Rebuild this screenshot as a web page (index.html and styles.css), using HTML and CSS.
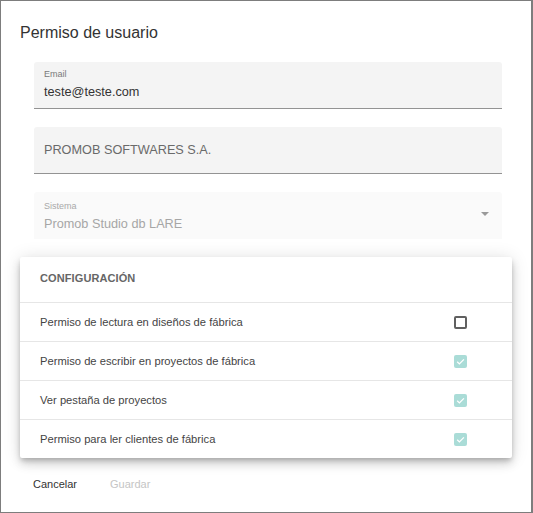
FILE: index.html
```html
<!DOCTYPE html>
<html lang="es">
<head>
<meta charset="utf-8">
<title>Permiso de usuario</title>
<link rel="stylesheet" href="styles.css">
</head>
<body>
<div class="frame">
  <h1 class="title">Permiso de usuario</h1>
  <div class="fields">
    <div class="field">
      <div class="label">Email</div>
      <div class="value">teste@teste.com</div>
    </div>
    <div class="field field-nolabel">
      <div class="value value-muted">PROMOB SOFTWARES S.A.</div>
    </div>
    <div class="field field-disabled">
      <div class="field-main">
        <div class="label">Sistema</div>
        <div class="value">Promob Studio db LARE</div>
      </div>
      <span class="arrow"></span>
    </div>
  </div>
  <div class="card">
    <div class="card-header">CONFIGURACIÓN</div>
    <div class="row">
      <span class="row-text">Permiso de lectura en diseños de fábrica</span>
      <span class="cb"></span>
    </div>
    <div class="row">
      <span class="row-text">Permiso de escribir en proyectos de fábrica</span>
      <span class="cb cb-checked"><svg viewBox="0 0 13 13" width="13" height="13"><path d="M3.2 6.8 L5.4 8.9 L9.9 4.4" fill="none" stroke="#fff" stroke-width="1.3"/></svg></span>
    </div>
    <div class="row">
      <span class="row-text">Ver pestaña de proyectos</span>
      <span class="cb cb-checked"><svg viewBox="0 0 13 13" width="13" height="13"><path d="M3.2 6.8 L5.4 8.9 L9.9 4.4" fill="none" stroke="#fff" stroke-width="1.3"/></svg></span>
    </div>
    <div class="row">
      <span class="row-text">Permiso para ler clientes de fábrica</span>
      <span class="cb cb-checked"><svg viewBox="0 0 13 13" width="13" height="13"><path d="M3.2 6.8 L5.4 8.9 L9.9 4.4" fill="none" stroke="#fff" stroke-width="1.3"/></svg></span>
    </div>
  </div>
  <div class="actions">
    <span class="btn">Cancelar</span>
    <span class="btn btn-disabled">Guardar</span>
  </div>
</div>
</body>
</html>
```

FILE: styles.css
```css
* { box-sizing: border-box; }
html, body { margin: 0; padding: 0; background: #fff; }
body { font-family: "Liberation Sans", Arial, sans-serif; }

.frame {
  width: 533px;
  height: 513px;
  border: 1px solid #7d7d7d;
  border-right-width: 2px;
  background: #fff;
  padding-top: 22px;
}

.title {
  margin: 0 0 19px 19px;
  font-size: 16px;
  line-height: 20px;
  font-weight: normal;
  color: #333;
}

.fields {
  display: flex;
  flex-direction: column;
  gap: 18px;
  margin: 0 29px 0 33px;
}

.field {
  height: 47px;
  background: #f4f4f4;
  border-bottom: 1px solid #939393;
  border-radius: 3px 3px 0 0;
  padding: 7px 10px 0 10px;
}

.label {
  font-size: 9px;
  line-height: 11px;
  color: #7a7a7a;
}

.value {
  margin-top: 5px;
  font-size: 12.7px;
  line-height: 15px;
  color: #333;
}

.field-nolabel { padding-top: 16px; }
.field-nolabel .value { margin-top: 0; }
.value-muted { color: #6a6a6a; }

.field-disabled {
  background: #fafafa;
  border-bottom-color: transparent;
  display: flex;
  align-items: center;
  padding-top: 0;
  padding-right: 13px;
}
.field-disabled .field-main { flex: 1; padding-top: 2px; }
.field-disabled .label { color: #a9a9a9; }
.field-disabled .value { color: #a6a6a6; }

.arrow {
  width: 0;
  height: 0;
  border-left: 4px solid transparent;
  border-right: 4px solid transparent;
  border-top: 4px solid #9a9a9a;
  margin-top: -2px;
}

.card {
  margin: 18px 19px 0 19px;
  background: #fff;
  border-radius: 2px;
  box-shadow: 0 3px 5px -1px rgba(0,0,0,.2), 0 6px 10px 0 rgba(0,0,0,.14), 0 1px 18px 0 rgba(0,0,0,.12);
}

.card-header {
  height: 45px;
  padding: 15px 20px 0 20px;
  font-size: 11px;
  line-height: 13px;
  font-weight: bold;
  letter-spacing: 0.1px;
  color: #666;
}

.row {
  height: 39px;
  border-top: 1px solid #e6e6e6;
  display: flex;
  align-items: center;
  justify-content: space-between;
  padding: 0 45px 0 20px;
}

.row-text {
  font-size: 11.2px;
  line-height: 14px;
  color: #444;
}

.cb {
  width: 13px;
  height: 13px;
  border: 2px solid #606060;
  border-radius: 2px;
  display: block;
}
.cb-checked {
  border: none;
  background: #aadcd7;
}
.cb svg { display: block; }

.actions {
  display: flex;
  gap: 33px;
  margin: 20px 0 0 32px;
}
.btn {
  font-size: 11px;
  line-height: 13px;
  color: #333;
}
.btn-disabled { color: #c5c5c5; }
```
